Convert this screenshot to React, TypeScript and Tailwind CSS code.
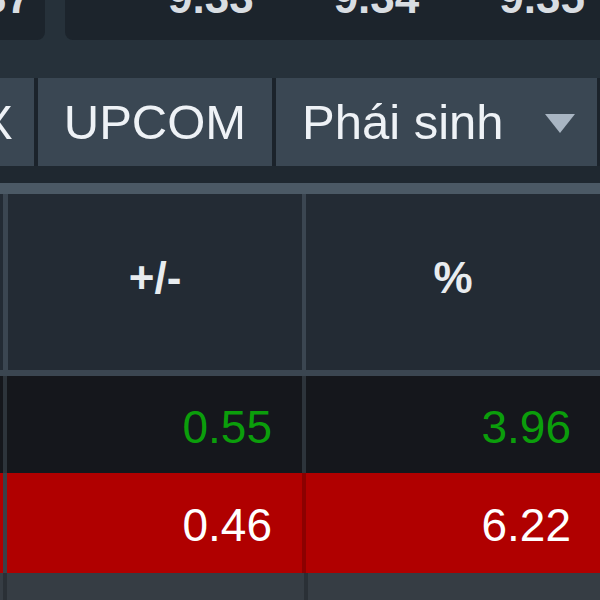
const topValues = ["9.33", "9.34", "9.35"];

function Tab({ label, className = "", children }: { label: string; className?: string; children?: React.ReactNode }) {
  return (
    <div className={`flex h-full shrink-0 items-center bg-[#3a4753] text-[49px] leading-none text-[#eef2f6] ${className}`}>
      {label}
      {children}
    </div>
  );
}

export default function App() {
  return (
    <div className="h-[600px] w-[600px] overflow-hidden bg-[#26313a] font-['Liberation_Sans',Arial,sans-serif]">
      {/* Index cards (cut off at top) */}
      <div className="flex h-[40px] gap-[20px]">
        <div className="flex w-[45px] shrink-0 justify-end overflow-hidden rounded-br-[8px] bg-[#1c242c] pr-[14px]">
          <span className="mt-[-24px] text-[44px] font-bold leading-none text-[#d8dde2]">37</span>
        </div>
        <div className="flex flex-1 gap-[80px] overflow-hidden rounded-bl-[8px] bg-[#1c242c] pl-[103px]">
          {topValues.map((v) => (
            <span key={v} className="mt-[-24px] text-[44px] font-bold leading-none text-[#d8dde2]">
              {v}
            </span>
          ))}
        </div>
      </div>

      {/* Exchange tabs */}
      <div className="mt-[38px] flex h-[88px] gap-[4px] bg-[#1b232b]">
        <Tab label="HNX" className="ml-[-116px] w-[150px] justify-end pr-[21px]" />
        <Tab label="UPCOM" className="w-[234px] justify-center" />
        <Tab label="Phái sinh" className="w-[321px] pl-[26px]">
          <svg width="30" height="19" viewBox="0 0 30 19" className="ml-[41px] mt-[2px]">
            <path d="M0 0 H30 L15 19 Z" fill="#a8b5c2" />
          </svg>
        </Tab>
        <Tab label="" className="w-[40px]" />
      </div>
      <div className="h-[17px] bg-[#1f2830]" />
      <div className="h-[11px] bg-[#4b5965]" />

      {/* Header */}
      <div className="flex h-[182px] border-b-[6px] border-[#3b4651] bg-[#232b34] text-[44px] font-bold leading-none text-[#e8ecef]">
        <div className="ml-[3px] flex w-[301px] items-center justify-center border-l-[5px] border-[#3b4651] pb-[8px]">+/-</div>
        <div className="w-[4px] bg-[#3b4651]" />
        <div className="flex w-[296px] items-center justify-center pb-[8px]">%</div>
      </div>

      {/* Row 1 */}
      <div className="flex h-[97px] bg-[#15171c] text-[46px] leading-none text-[#0b9e0b]">
        <div className="ml-[3px] flex w-[301px] items-center justify-end border-l-[4px] border-[#2d343b] pr-[30px] pt-[4px]">0.55</div>
        <div className="w-[4px] bg-[#2d343b]" />
        <div className="flex w-[296px] items-center justify-end pr-[29px] pt-[4px]">3.96</div>
      </div>

      {/* Row 2 */}
      <div className="flex h-[100px] bg-[#b00000] text-[46px] leading-none text-white">
        <div className="ml-[3px] flex w-[301px] items-center justify-end border-l-[4px] border-[#3a4047] pr-[30px] pt-[4px]">0.46</div>
        <div className="w-[4px] bg-[#8c0000]" />
        <div className="flex w-[296px] items-center justify-end pr-[29px] pt-[4px]">6.22</div>
      </div>

      {/* Footer strip */}
      <div className="flex h-[27px] bg-[#363d44]">
        <div className="ml-[3px] w-[301px] border-l-[4px] border-[#2a3036]" />
        <div className="w-[4px] bg-[#2a3036]" />
      </div>
    </div>
  );
}
